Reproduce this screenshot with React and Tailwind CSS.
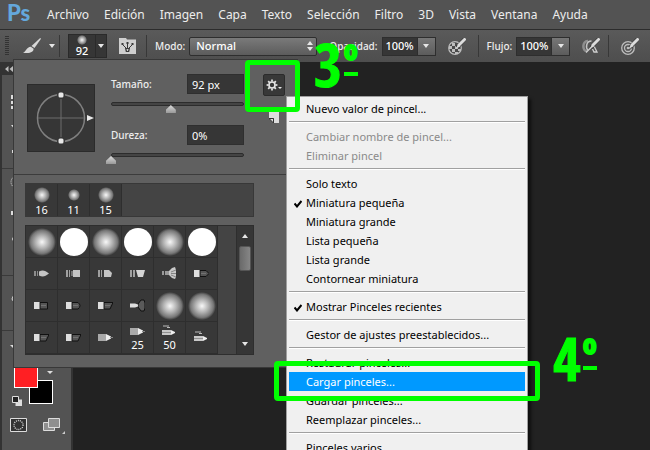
import { useState } from 'react';
import clsx from 'clsx';

const MENUS = ['Archivo', 'Edición', 'Imagen', 'Capa', 'Texto', 'Selección', 'Filtro', '3D', 'Vista', 'Ventana', 'Ayuda'];

// null = separator
const BRUSH_MENU = [
  { label: 'Nuevo valor de pincel...' },
  null,
  { label: 'Cambiar nombre de pincel...', disabled: true },
  { label: 'Eliminar pincel', disabled: true },
  null,
  { label: 'Solo texto' },
  { label: 'Miniatura pequeña', checked: true },
  { label: 'Miniatura grande' },
  { label: 'Lista pequeña' },
  { label: 'Lista grande' },
  { label: 'Contornear miniatura' },
  null,
  { label: 'Mostrar Pinceles recientes', checked: true },
  null,
  { label: 'Gestor de ajustes preestablecidos...' },
  null,
  { label: 'Restaurar pinceles...' },
  { label: 'Cargar pinceles...', active: true },
  { label: 'Guardar pinceles...' },
  { label: 'Reemplazar pinceles...' },
  null,
  { label: 'Pinceles varios' },
];

const RECENT = [
  { size: 16, dot: 'size-4' },
  { size: 11, dot: 'size-3' },
  { size: 15, dot: 'size-4' },
];

const PRESETS = [
  'soft', 'hard', 'soft', 'hard', 'soft', 'hard',
  'point', 'blunt', 'curve', 'angle', 'fan', 'darkPoint',
  'darkBlunt', 'darkRound', 'darkAngle', 'darkFan', 'soft', 'soft',
  'darkAngle', 'darkAngle', 'pencil', 'pencil:25', 'airbrush:50', 'airbrush',
];

const SOFT = 'bg-[radial-gradient(closest-side,#f8f8f8_0%,#b4b4b4_45%,#777_82%,#393939_100%)]';

const GEAR_TEETH = [0, 45, 90, 135, 180, 225, 270, 315];

function Caret({ className = '' }) {
  return (
    <svg viewBox="0 0 6 4" className={clsx('h-1 w-1.5 shrink-0', className)} fill="#e6e6e6" aria-hidden="true">
      <path d="M0 0h6L3 4z" />
    </svg>
  );
}

function GearIcon() {
  return (
    <svg viewBox="0 0 12 12" className="size-3 shrink-0" fill="none" stroke="#e6e6e6" aria-hidden="true">
      <circle cx="6" cy="6" r="3" strokeWidth="1.6" />
      {GEAR_TEETH.map((a) => (
        <path key={a} d="M6 .6v2" strokeWidth="1.7" transform={`rotate(${a} 6 6)`} />
      ))}
    </svg>
  );
}

function Divider() {
  return <span className="h-[22px] w-px shrink-0 bg-[#383838]" />;
}

function BrushIcon() {
  return (
    <svg viewBox="0 0 18 16" className="h-4 w-[18px] shrink-0" fill="#d8d8d8" aria-hidden="true">
      <path d="M17.2 0 18 .8 11.500 10 8.500 8z" />
      <path d="M7.800 8.800 10.600 10.800C10.500 14 7.500 15.800 0 14.800 3 14 3.500 9 7.800 8.800z" />
    </svg>
  );
}

function PanelIcon() {
  return (
    <svg viewBox="0 0 17 16" className="h-4 w-[17px]" aria-hidden="true">
      <path d="M0 0h7l1 1.500h9V16H0z" fill="#cfcfcf" />
      <path d="M6 10h5l-.8 4H6.800z" fill="#3a3a3a" />
      <path d="M7.500 11h2l-.5 2H8z" fill="#cfcfcf" />
      <path d="M8.500 5v5M3.500 6.500 7 10M13.500 6.500 10 10" stroke="#3a3a3a" />
      <path d="M7.500 4h2v2h-2zM2.500 5h2v2h-2zM12.500 5h2v2h-2z" fill="#3a3a3a" />
    </svg>
  );
}

function PenStroke() {
  return (
    <>
      <path d="M17 0.500 9 9.500" stroke="#3c3c3c" strokeWidth="4" />
      <path d="M16.500 1.500 11 7" stroke="#dcdcdc" strokeWidth="3" strokeLinecap="round" />
      <path d="M10 6.500 12 8.500 7.500 11z" fill="#dcdcdc" />
    </>
  );
}

function OpacityPressureIcon() {
  return (
    <svg viewBox="0 0 18 17" className="h-[17px] w-[18px]" fill="none" aria-hidden="true">
      <circle cx="7" cy="10" r="6.300" fill="#4a4a4a" stroke="#bdbdbd" strokeWidth="1.200" />
      <path d="M4 5h3v3H4zM7 8h3v3H7zM1 8h3v3H1zM4 11h3v3H4zM10 11h3v2h-3zM7 14h3v2H7zM10 5h2v3h-2z" fill="#bdbdbd" />
      <PenStroke />
    </svg>
  );
}

function AirbrushIcon() {
  return (
    <svg viewBox="0 0 18 17" className="h-[17px] w-[18px]" fill="none" aria-hidden="true">
      <path d="M6 3C0 2.500 0 13.500 5 13" stroke="#8f8f8f" strokeWidth="2.500" />
      <path d="M9.500 3C4 3 3.500 10 6 12" stroke="#c4c4c4" strokeWidth="1.500" />
      <path d="M4 14.500 11.500 7 15 14h-3l-1.500-3" stroke="#cfcfcf" strokeWidth="1.300" />
      <PenStroke />
    </svg>
  );
}

function SizePressureIcon() {
  return (
    <svg viewBox="0 0 18 17" className="h-[17px] w-[18px]" fill="none" aria-hidden="true">
      <circle cx="7" cy="10" r="6.300" stroke="#bdbdbd" strokeWidth="1.300" />
      <circle cx="7" cy="10" r="3.500" stroke="#bdbdbd" strokeWidth="1.300" />
      <circle cx="7" cy="10" r="1.300" fill="#bdbdbd" />
      <PenStroke />
    </svg>
  );
}

function PercentField({ id, label }) {
  const [value, setValue] = useState('100%');
  return (
    <div className="flex items-center">
      <label htmlFor={id} className="mr-1">{label}</label>
      <div className="flex h-[19px] border border-[#2e2e2e]">
        <input
          id={id}
          value={value}
          onChange={(e) => setValue(e.target.value)}
          className="w-[34px] bg-[#363636] text-center text-[11px] text-white outline-none"
        />
        <button aria-label={`Ajustar ${label}`} className="flex w-[18px] items-center justify-center border-l border-[#2e2e2e] bg-linear-to-b from-[#777] to-[#5c5c5c]">
          <Caret />
        </button>
      </div>
    </div>
  );
}

function OptionsBar() {
  return (
    <div className="flex h-[33px] shrink-0 items-center border-t border-[#2c2c2c] bg-linear-to-b from-[#5a5a5a] to-[#4e4e4e] pl-[5px] text-[10px] font-medium text-[#ededed]">
      <span className="h-5 w-1 shrink-0 bg-[repeating-linear-gradient(to_bottom,#333_0_1px,transparent_1px_2px)]" />
      <button aria-label="Pincel" className="ml-3.5 mr-1 flex items-center gap-2">
        <BrushIcon />
        <Caret />
      </button>
      <Divider />
      <button aria-label="Selector de pinceles preestablecidos" className="ml-2 mr-3 flex h-6 shrink-0 border border-[#2a2a2a] bg-[#363636]">
        <span className="flex w-[26px] flex-col items-center text-[11px] leading-3 text-white">
          <span className={clsx('size-2.5 rounded-full', SOFT)} />
          92
        </span>
        <span className="flex h-full w-[11px] items-center justify-center border-l border-[#2a2a2a]">
          <Caret />
        </span>
      </button>
      <button aria-label="Panel de pinceles" className="mr-2.5">
        <PanelIcon />
      </button>
      <Divider />
      <label htmlFor="mode" className="ml-2 mr-1">Modo:</label>
      <div className="relative mr-3 w-32">
        <select
          id="mode"
          className="block h-[19px] w-full appearance-none rounded-xs border border-[#2e2e2e] bg-linear-to-b from-[#7a7a7a] to-[#5c5c5c] pl-1.5 text-[11px] leading-4 text-white outline-none"
        >
          <option>Normal</option>
        </select>
        <svg viewBox="0 0 6 10" className="pointer-events-none absolute right-1 top-1 h-2.5 w-1.5" fill="#e6e6e6" aria-hidden="true">
          <path d="M0 4h6L3 0zM0 6h6L3 10z" />
        </svg>
      </div>
      <PercentField id="opacity" label="Opacidad:" />
      <button aria-label="Presión para opacidad" className="mx-3"><OpacityPressureIcon /></button>
      <Divider />
      <div className="w-2" />
      <PercentField id="flow" label="Flujo:" />
      <button aria-label="Aerógrafo" className="ml-3 mr-2"><AirbrushIcon /></button>
      <Divider />
      <button aria-label="Presión para tamaño" className="ml-3"><SizePressureIcon /></button>
    </div>
  );
}

// the tool column is mostly covered by the brush picker
function ToolBox() {
  return (
    <aside className="flex w-[73px] shrink-0 flex-col border-x-2 border-[#333] bg-[#535353]">
      <button aria-label="Contraer panel" className="flex h-[13px] shrink-0 items-center bg-[#333] pl-[3px]">
        <svg viewBox="0 0 8 6" className="h-1.5 w-2" fill="#bbb" aria-hidden="true">
          <path d="M3.500 0v6L0 3zM8 0v6L4.500 3z" />
        </svg>
      </button>
      <div className="flex h-[94px] flex-col gap-4 border-b border-[#3a3a3a] pl-[9px] pt-5">
        <svg viewBox="0 0 14 14" className="size-3.5" fill="none" stroke="#ddd" aria-hidden="true">
          <path d="M1 1h12v12H1z" strokeDasharray="3 2" strokeWidth="2" />
        </svg>
        <svg viewBox="0 0 14 28" className="h-7 w-3.5" fill="#ddd" aria-hidden="true">
          <path d="M0 0h4v5zM1 25h5v3H1z" />
        </svg>
      </div>
      <div className="h-[107px] border-b border-[#3a3a3a] pl-2 pt-1.5">
        <svg viewBox="0 0 14 70" className="h-[70px] w-3.5" fill="#ddd" aria-hidden="true">
          <circle cx="7" cy="7" r="6" fill="none" stroke="#ddd" strokeDasharray="1 1" />
          <path d="M1 36h5v4H1zM4 60 2 64l2 4z" />
        </svg>
      </div>
      <div className="h-[55px] border-b border-[#3a3a3a] pl-[9px] pt-4">
        <svg viewBox="0 0 14 12" className="h-3 w-3.5" fill="none" stroke="#ddd" aria-hidden="true">
          <path d="M4 0 1 7l3 5" />
        </svg>
      </div>
      <div className="h-9 pl-2 pt-3.5">
        <svg viewBox="0 0 14 6" className="h-1.5 w-3.5" fill="#ddd" aria-hidden="true">
          <path d="M0 0h6v6z" />
        </svg>
      </div>
      <div className="relative ml-3 h-[37px] w-[39px]">
        <button aria-label="Color de fondo" className="absolute bottom-0 right-0 size-6 border border-white bg-black" />
        <button aria-label="Color frontal" className="absolute -top-2.5 left-0 h-[31px] w-6 border border-white bg-[#ff1f23]" />
        <svg viewBox="0 0 6 3" className="absolute right-0 top-1 h-[3px] w-1.5" fill="#ddd" aria-hidden="true">
          <path d="M0 0h6L3 3z" />
        </svg>
      </div>
      <button aria-label="Colores por defecto" className="-mt-2 ml-[10px] w-2.5">
        <svg viewBox="0 0 10 10" className="size-2.5" aria-hidden="true">
          <path d="M3.500 3.500H10V10H3.500z" fill="#ddd" />
          <path d="M.5.5h6v6h-6z" fill="#222" stroke="#ddd" />
        </svg>
      </button>
      <div className="mt-3 flex items-start gap-4 pl-2">
        <button aria-label="Máscara rápida">
          <svg viewBox="0 0 17 14" className="h-3.5 w-[17px]" fill="none" stroke="#ddd" aria-hidden="true">
            <path d="M.5.5h16v13H.5z" fill="#333" />
            <circle cx="8.500" cy="7" r="4.500" strokeDasharray="1 1" strokeWidth="1.300" />
          </svg>
        </button>
        <button aria-label="Modo de pantalla">
          <svg viewBox="0 0 23 17" className="h-[17px] w-[23px]" fill="#8f8f8f" stroke="#ddd" aria-hidden="true">
            <path d="M.5 4.500h11v8H.5z" />
            <path d="M5.500.5h11v9h-11z" />
            <path d="M22 13v3h-3z" fill="#ccc" stroke="none" />
          </svg>
        </button>
      </div>
    </aside>
  );
}

function Slider({ id, label, unit, initial, position }) {
  const [value, setValue] = useState(initial);
  const [pos, setPos] = useState(position);
  return (
    <div className="w-[133px]">
      <div className="mb-2 flex h-5 items-center justify-between">
        <label htmlFor={id} className="text-[10px] font-medium">{label}</label>
        <input
          id={id}
          value={`${value}${unit}`}
          onChange={(e) => setValue(parseInt(e.target.value, 10) || 0)}
          className="h-5 w-[57px] border border-[#2f2f2f] bg-[#363636] pl-1 text-[11px] text-white outline-none"
        />
      </div>
      <div className="h-1 rounded-full border border-[#2c2c2c] bg-[#444]" />
      <input
        type="range"
        aria-label={label}
        value={pos}
        onChange={(e) => setPos(e.target.value)}
        className="-mx-[5px] -mt-px block h-2 w-[143px] appearance-none bg-transparent [&::-webkit-slider-thumb]:h-2 [&::-webkit-slider-thumb]:w-2.5 [&::-webkit-slider-thumb]:appearance-none [&::-webkit-slider-thumb]:bg-linear-to-b [&::-webkit-slider-thumb]:from-[#ddd] [&::-webkit-slider-thumb]:to-[#999] [&::-webkit-slider-thumb]:[clip-path:polygon(50%_0,100%_60%,100%_100%,0_100%,0_60%)]"
      />
    </div>
  );
}

function AngleDial() {
  return (
    <svg viewBox="0 0 68 68" className="size-[68px] shrink-0 bg-[#363636]" fill="none" role="img" aria-label="Ángulo y redondez">
      <path d="M.5.5h67v67H.5z" stroke="#2b2b2b" />
      <circle cx="34" cy="34" r="23.500" stroke="#808080" strokeWidth="1.500" />
      <path d="M34 11v46M11 34h46" stroke="#6c6c6c" />
      <circle cx="34" cy="11" r="4" fill="#363636" />
      <circle cx="34" cy="57" r="4" fill="#363636" />
      <rect x="31.500" y="8.500" width="5" height="5" rx="1.500" fill="#e8e8e8" />
      <rect x="31.500" y="54.500" width="5" height="5" rx="1.500" fill="#e8e8e8" />
      <path d="M60 31v6l7-3z" fill="#e8e8e8" />
    </svg>
  );
}

function TipShape({ kind }) {
  switch (kind) {
    case 'point':
      return (
        <>
          <path d="M0 5h2v5H0zM3 5h1v5H3z" fill="#8c8c8c" />
          <path d="M5 5.500c4-2 6-1 10 2-4 3-6 4-10 2z" fill="#c4c4c4" />
        </>
      );
    case 'blunt':
      return (
        <>
          <path d="M0 4h2v7H0zM3 4h1v7H3z" fill="#a0a0a0" />
          <path d="M5 5h2v5H5z" fill="#777" />
          <path d="M7 4h7v7H7z" fill="#c4c4c4" />
        </>
      );
    case 'curve':
      return (
        <>
          <path d="M0 4h2v7H0zM3 4h1v7H3z" fill="#a0a0a0" />
          <path d="M6 4h5l3 3-1 4H6z" fill="#c4c4c4" />
        </>
      );
    case 'angle':
      return (
        <>
          <path d="M0 4h2v7H0zM3 4h2v7H3z" fill="#a0a0a0" />
          <path d="M6 4h9l-2 7H8z" fill="#d4d4d4" />
        </>
      );
    case 'fan':
      return (
        <>
          <path d="M0 5h2v4H0zM3 5h4v4H3z" fill="#999" />
          <path d="M7 5l3-3 3-1 1 3v7l-1 2-3-1-3-3z" fill="#c9c9c9" />
          <path d="M9 6l5-2M9 7.500h5M9 9l5 2" stroke="#555" strokeWidth=".6" />
        </>
      );
    case 'darkPoint':
    case 'darkBlunt':
    case 'darkRound':
    case 'darkAngle': {
      const tips = {
        darkPoint: 'M6 4.500h6l3 3-3 3H6z',
        darkBlunt: 'M6 4.500h7.500v6.500H6z',
        darkRound: 'M6 4.500h6q4 3.200 0 6.500H6z',
        darkAngle: 'M6 4.500h9L12 11H6z',
      };
      return (
        <>
          <path d={tips[kind]} fill="#555" stroke="#111" />
          <path d="M7 7.500h5" stroke="#808080" strokeWidth=".7" />
          <path d="M0 4h5.500v7H0z" fill="#dedede" />
        </>
      );
    }
    case 'darkFan':
      return (
        <>
          <path d="M8 6l3-4h3l1 3v5l-1 3h-3L8 9z" fill="#5a5a5a" stroke="#111" />
          <path d="M0 5.500h5l3 1v2l-3 1H0z" fill="#dedede" />
        </>
      );
    case 'pencil':
      return (
        <>
          <path d="M0 4h8v7H0z" fill="#a9a9a9" />
          <path d="M8 4l5 2.500v2L8 11z" fill="#eee" />
          <path d="M12 7h3v1h-3z" fill="#888" />
        </>
      );
    default:
      return (
        <>
          <path d="M1 2h6M5 3.500h3" stroke="#bbb" />
          <path d="M0 6h9v5H0z" fill="#c9c9c9" />
          <path d="M0 8.500h9" stroke="#777" strokeWidth=".7" />
          <path d="M9 6l4 2v1l-4 2z" fill="#eee" />
        </>
      );
  }
}

function Preset({ preset }) {
  const [kind, size] = preset.split(':');
  return (
    <button
      aria-label={`Pincel ${kind}`}
      className="flex size-8 flex-col items-center justify-center border-b border-r border-[#2e2e2e] text-[11px] leading-3 text-white"
    >
      {kind === 'soft' && <span className={clsx('size-7 rounded-full', SOFT)} />}
      {kind === 'hard' && <span className="size-7 rounded-full bg-white" />}
      {kind !== 'soft' && kind !== 'hard' && (
        <svg viewBox="0 0 15 15" className="size-[15px] shrink-0" fill="none" aria-hidden="true">
          <TipShape kind={kind} />
        </svg>
      )}
      {size && <span>{size}</span>}
    </button>
  );
}

function BrushPicker() {
  return (
    <section className="absolute left-[13px] top-[59px] w-[285px] border border-[#383838] bg-[#606060] text-[#ededed]">
      <div className="flex border-b border-[#3c3c3c] px-[13px] pb-2.5 pt-3.5">
        <div className="pt-2.5">
          <AngleDial />
        </div>
        <div className="ml-4 flex flex-col gap-3">
          <Slider id="size" label="Tamaño:" unit=" px" initial={92} position={45} />
          <Slider id="hardness" label="Dureza:" unit="%" initial={0} position={0} />
        </div>
        <div className="ml-[19px] flex flex-col items-center gap-4">
          <button aria-label="Opciones de pincel" className="flex size-[22px] items-center justify-center rounded-xs border border-[#2b2b2b] bg-[#383838]">
            <GearIcon />
            <svg viewBox="0 0 4 2" className="mt-1.5 h-0.5 w-1" fill="#e6e6e6" aria-hidden="true">
              <path d="M0 0h4L2 2z" />
            </svg>
          </button>
          <button aria-label="Crear pincel nuevo">
            <svg viewBox="0 0 10 11" className="h-[11px] w-2.5" aria-hidden="true">
              <path d="M0 0h10v11H5V6H0z" fill="#ddd" />
              <path d="M0 6.500h4.500V11z" fill="#ddd" stroke="#333" />
            </svg>
          </button>
        </div>
      </div>
      <div className="flex flex-col items-start gap-2 px-[11px] pb-3 pt-2">
        <div className="flex h-[34px] w-[229px] border border-[#383838] bg-[#444]">
          {RECENT.map((brush) => (
            <button key={brush.size} className="flex w-8 flex-col items-center justify-end border-r border-[#2e2e2e] bg-[#383838] text-[11px] leading-3 text-white">
              <span className="flex h-[18px] items-center">
                <span className={clsx('rounded-full', brush.dot, SOFT)} />
              </span>
              {brush.size}
            </button>
          ))}
        </div>
        <div className="flex w-[229px] border border-[#2e2e2e] bg-[#444]">
          <div className="grid grid-cols-6 bg-[#383838]">
            {PRESETS.map((preset, i) => (
              <Preset key={i} preset={preset} />
            ))}
          </div>
          <div className="ml-auto flex w-[17px] flex-col items-center border-l border-[#2e2e2e] bg-[#363636] py-2">
            <Caret className="rotate-180" />
            <span className="mt-2 h-[25px] w-3 rounded-xs border border-[#555] bg-linear-to-r from-[#6a6a6a] to-[#868686]" />
            <Caret className="mt-auto" />
          </div>
        </div>
      </div>
    </section>
  );
}

function BrushMenu() {
  return (
    <ul role="menu" className="absolute left-[286px] top-24 w-[242px] border border-[#a0a0a0] bg-[#f0f0f0] p-0.5 text-[11px] text-black shadow-[3px_3px_3px_#0009]">
      {BRUSH_MENU.map((item, i) =>
        item ? (
          <li key={i} role="none">
            <button
              role="menuitem"
              disabled={item.disabled}
              className={clsx(
                'flex h-[19px] w-full items-center whitespace-nowrap pt-0.5 text-left',
                item.disabled && 'text-[#8a8a8a]',
                item.active && 'bg-[#0099ff] text-white',
              )}
            >
              <span className="flex w-[17px] shrink-0 justify-center">
                {item.checked && (
                  <svg viewBox="0 0 8 8" className="size-2" fill="none" stroke="#000" strokeWidth="2" aria-hidden="true">
                    <path d="M.5 3.500 3 6.500 7.500 1" />
                  </svg>
                )}
              </span>
              {item.label}
            </button>
          </li>
        ) : (
          <li key={i} role="separator" className="h-[9px] pt-[3px]">
            <div className="border-b border-t border-b-white border-t-[#a0a0a0]" />
          </li>
        ),
      )}
    </ul>
  );
}

function StepNumber({ n, className }) {
  return (
    <div className={clsx('absolute flex items-start gap-0.5 font-["Open_Sans_Condensed","Noto_Sans",sans-serif] font-bold text-[#00ff00]', className)}>
      <span className="text-[60px] leading-[44px] [-webkit-text-stroke:1px_#00ff00]">{n}</span>
      <span className="mt-1 border-b-4 text-[42px] leading-[26px] [-webkit-text-stroke:2px_#00ff00]">º</span>
    </div>
  );
}

export default function App() {
  return (
    <div className="relative flex h-screen flex-col overflow-hidden bg-[#222] font-['Noto_Sans',sans-serif]">
      <nav className="flex h-[29px] shrink-0 items-center bg-[#535353] pl-[7px] text-xs text-[#ededed]">
        <span className="w-10 pb-1 font-[Lato,sans-serif] text-[22px] font-black leading-6 text-[#64a8dc]">Ps</span>
        <div className="flex gap-[15px]">
          {MENUS.map((menu) => (
            <button key={menu}>{menu}</button>
          ))}
        </div>
      </nav>
      <OptionsBar />
      <div className="flex grow">
        <ToolBox />
        <main className="grow bg-[#222]" />
      </div>

      <BrushPicker />
      <BrushMenu />

      {/* tutorial marks */}
      <div className="absolute left-[245px] top-[60px] h-[52px] w-[55px] rounded-sm border-[5px] border-[#00ff00]" />
      <StepNumber n={3} className="left-[314px] top-[42px]" />
      <div className="absolute left-[274px] top-[361px] h-10 w-[266px] rounded-sm border-[5px] border-[#00ff00]" />
      <StepNumber n={4} className="left-[553px] top-[336px]" />
    </div>
  );
}
